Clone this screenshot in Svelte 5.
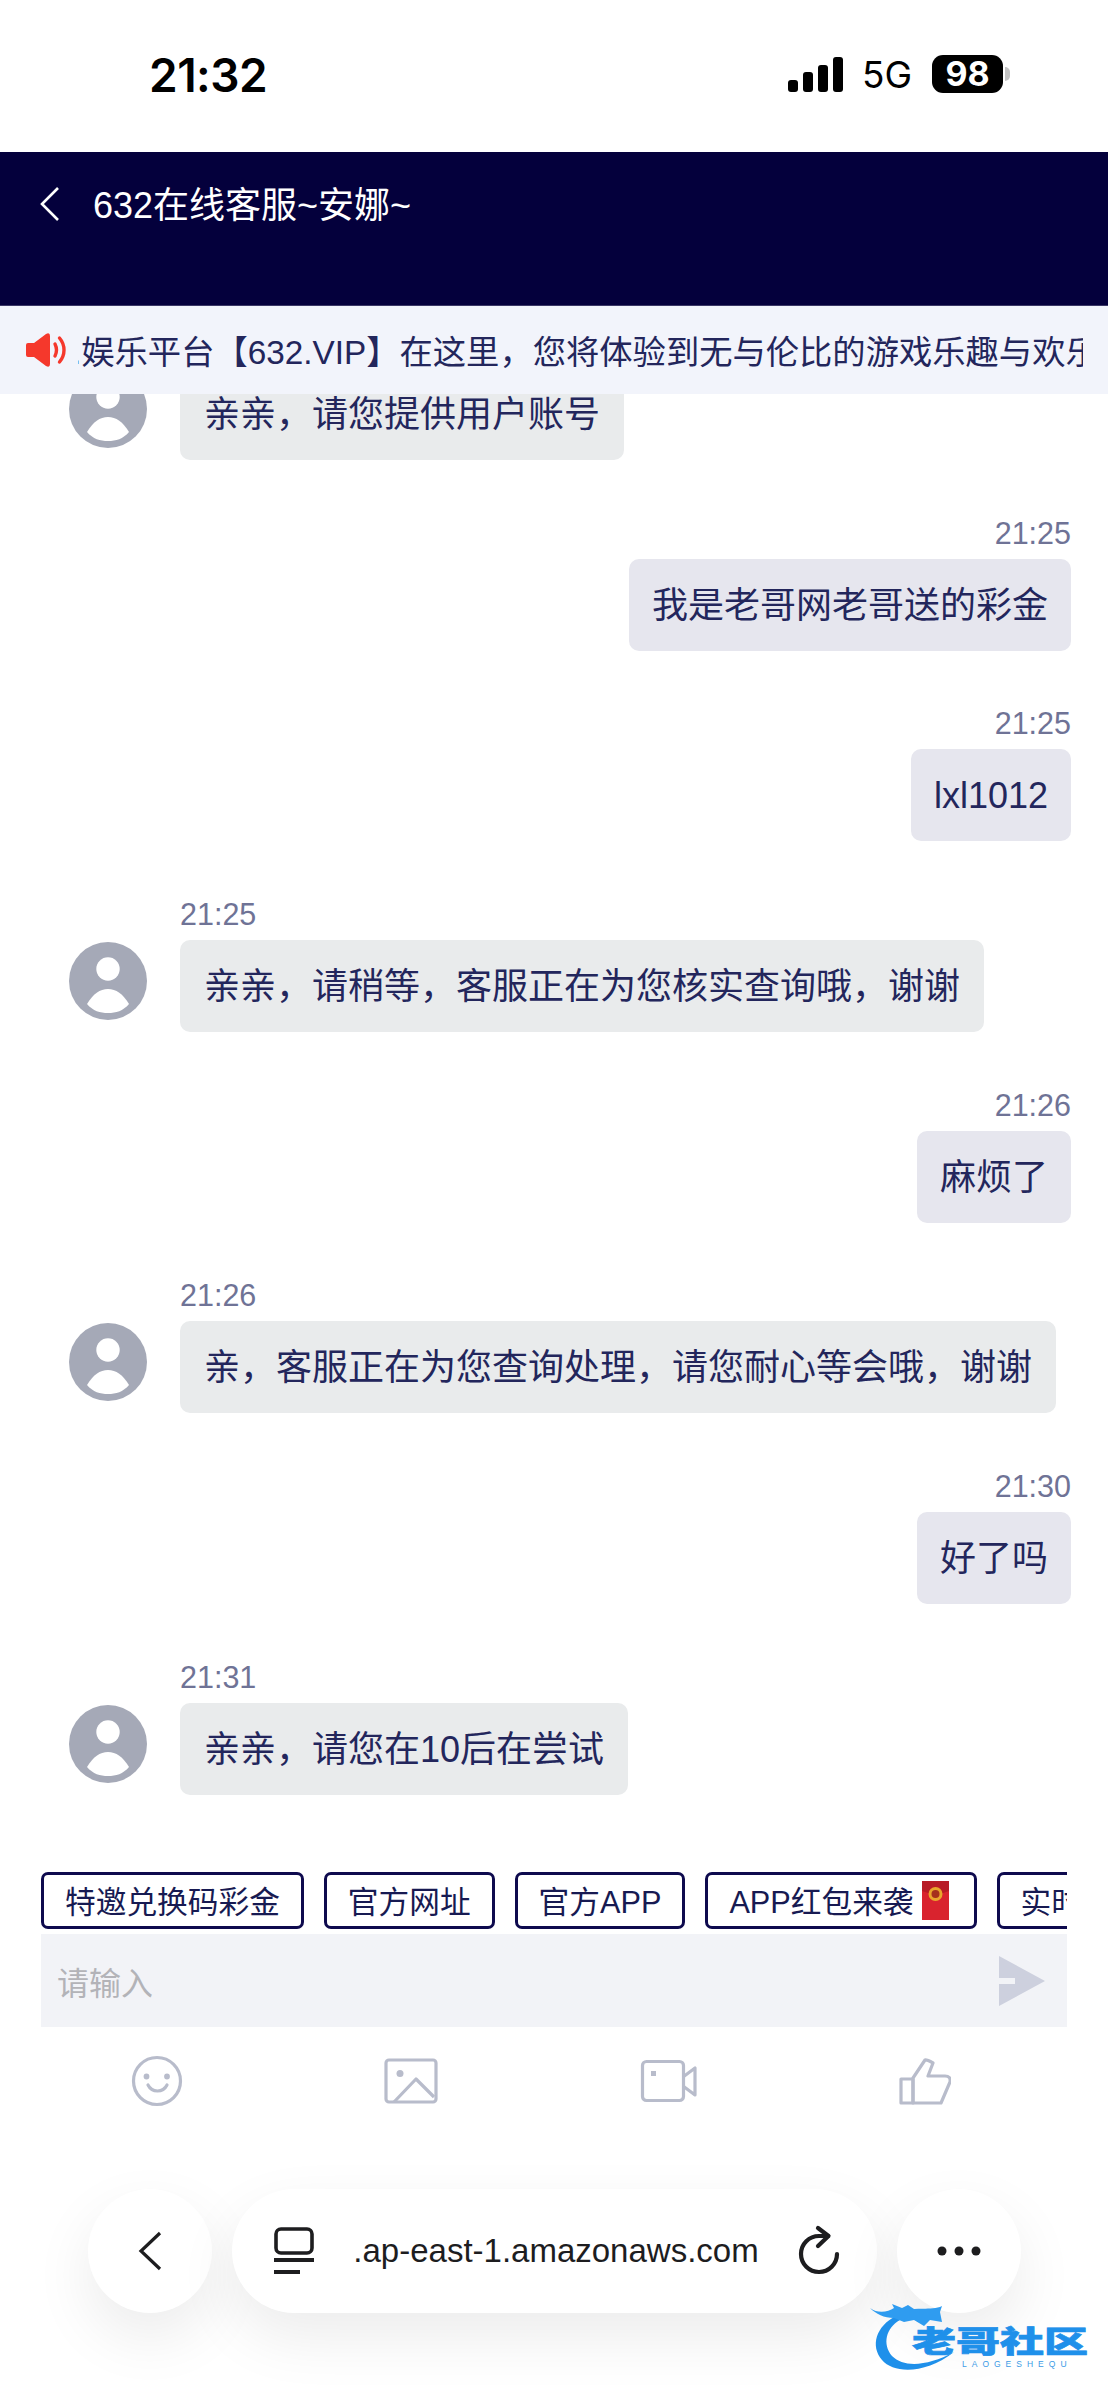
<script>
  const messages = [
    { side: 'left', time: '', text: '亲亲，请您提供用户账号' },
    { side: 'right', time: '21:25', text: '我是老哥网老哥送的彩金' },
    { side: 'right', time: '21:25', text: 'lxl1012' },
    { side: 'left', time: '21:25', text: '亲亲，请稍等，客服正在为您核实查询哦，谢谢' },
    { side: 'right', time: '21:26', text: '麻烦了' },
    { side: 'left', time: '21:26', text: '亲，客服正在为您查询处理，请您耐心等会哦，谢谢' },
    { side: 'right', time: '21:30', text: '好了吗' },
    { side: 'left', time: '21:31', text: '亲亲，请您在10后在尝试' },
    { side: 'right', time: '21:32', text: '' }
  ];

  const chips = ['特邀兑换码彩金', '官方网址', '官方APP', 'APP红包来袭', '实时'];
</script>

<div class="page">
  <div class="status">
    <span class="clock">21:32</span>
    <div class="status-right">
      <div class="signal">
        <i style="height:12px"></i><i style="height:20px"></i><i style="height:27px"></i><i style="height:35px"></i>
      </div>
      <span class="net">5G</span>
      <span class="battery">98</span>
      <span class="nub"></span>
    </div>
  </div>

  <header>
    <svg class="back" width="22" height="36" viewBox="0 0 22 36" fill="none">
      <path d="M19 2 3 18l16 16" stroke="#fff" stroke-width="2.6" />
    </svg>
    <span class="title">632在线客服~安娜~</span>
  </header>

  <div class="notice">
    <svg class="horn" width="42" height="34" viewBox="0 0 42 34">
      <path d="M0 12q0-2 2-2h6L20 1q4-2 4 2v28q0 4-4 2L8 24H2q-2 0-2-2z" fill="#f5382c" />
      <path d="M29 11c2 4 2 8 0 12M33.500 5c6 7 6 17 0 24" fill="none" stroke="#f5382c" stroke-width="3.400" stroke-linecap="round" />
    </svg>
    <div class="marquee"><span>.娱乐平台【632.VIP】在这里，您将体验到无与伦比的游戏乐趣与欢乐</span></div>
  </div>

  <main class="chat">
    {#each messages as m, i}
      <div class="msg {m.side}" class:first={i === 0}>
        {#if m.side === 'left'}
          <svg class="avatar" width="78" height="78" viewBox="0 0 78 78">
            <circle cx="39" cy="39" r="39" fill="#a5a9b7" />
            <circle cx="39" cy="27" r="11.7" fill="#fff" />
            <path d="M18 62C24 52 31 47 39 47S54 52 60 62C54 69 47 71 39 71S24 69 18 62Z" fill="#fff" />
          </svg>
        {/if}
        <div class="col">
          {#if m.time}<div class="time">{m.time}</div>{/if}
          {#if m.text}<div class="bubble">{m.text}</div>{/if}
        </div>
      </div>
    {/each}
  </main>

  <div class="chips">
    {#each chips as c}
      <div class="chip">
        {c}
        {#if c === 'APP红包来袭'}
          <svg class="packet" width="27" height="39" viewBox="0 0 27 39">
            <rect width="27" height="39" fill="#d9232e" />
            <path d="M0 0h27v10q-13 6-27 0z" fill="#b81c26" />
            <circle cx="13.5" cy="13" r="7" fill="#e9a62c" />
            <circle cx="13.5" cy="13" r="4" fill="#a5301c" />
          </svg>
        {/if}
      </div>
    {/each}
  </div>

  <div class="input">
    <span class="placeholder">请输入</span>
    <svg width="46" height="50" viewBox="0 0 46 50">
      <path d="M0 0 46 25 0 50V28h16v-6H0z" fill="#cdd0de" />
    </svg>
  </div>

  <div class="tools">
    <svg width="52" height="52" viewBox="0 0 52 52" fill="none" stroke="#b8bccb" stroke-width="3.2">
      <circle cx="26" cy="26" r="23.5" />
      <circle cx="15.500" cy="21.500" r="1.300" fill="#b8bccb" />
      <circle cx="36" cy="21.500" r="1.300" fill="#b8bccb" />
      <path d="M17 30c4 8 15 8 19 0" stroke-linecap="round" />
    </svg>
    <svg width="54" height="46" viewBox="0 0 54 46" fill="none" stroke="#b8bccb" stroke-width="3.2" stroke-linejoin="round">
      <rect x="2" y="2" width="50" height="42" rx="3" />
      <circle cx="16" cy="15.500" r="3.500" fill="#b8bccb" stroke="none" />
      <path d="M10 44 32 21l18 18" />
    </svg>
    <svg width="58" height="44" viewBox="0 0 58 44" fill="none" stroke="#b8bccb" stroke-width="3.2" stroke-linejoin="round">
      <rect x="2.500" y="2.500" width="41" height="39" rx="4" />
      <rect x="11" y="12" width="5" height="5" fill="#b8bccb" stroke="none" />
      <path d="M43 18 55 9v27L43 27" />
    </svg>
    <svg width="52" height="48" viewBox="0 0 52 48" fill="none" stroke="#b8bccb" stroke-width="3.2" stroke-linejoin="round">
      <path d="M14 21 26 3q1-1 8 3l-5 13h17q6 0 5 6l-9 21H14z" />
      <path d="M2 22h12v24H2z" />
    </svg>
  </div>

  <div class="browser">
    <div class="round">
      <svg width="24" height="40" viewBox="0 0 24 40" fill="none">
        <path d="M22 2 3 20l19 18" stroke="#1d1d1f" stroke-width="3.2" />
      </svg>
    </div>
    <div class="pill">
      <svg width="40" height="48" viewBox="0 0 40 48" fill="none">
        <rect x="2" y="2" width="36" height="24" rx="5" stroke="#1d1d1f" stroke-width="3.6" />
        <path d="M0 33h40" stroke="#1d1d1f" stroke-width="4" />
        <path d="M0 45h26" stroke="#1d1d1f" stroke-width="4" />
      </svg>
      <span class="url">.ap-east-1.amazonaws.com</span>
      <svg width="44" height="52" viewBox="0 0 44 52" fill="none" stroke="#1d1d1f" stroke-width="4.200" stroke-linecap="round" stroke-linejoin="round">
        <path d="M30 11H21A18 18 0 1 0 39 29" />
        <path d="M20 3l10.500 8L20 21" />
      </svg>
    </div>
    <div class="round">
      <svg width="44" height="10" viewBox="0 0 44 10" fill="#1d1d1f">
        <circle cx="5" cy="5" r="4.5" /><circle cx="22" cy="5" r="4.5" /><circle cx="39" cy="5" r="4.5" />
      </svg>
    </div>
  </div>

  <div class="mark">
    <svg width="110" height="80" viewBox="0 0 110 80">
      <path d="M28 16C8 26 2 46 14 60 26 74 58 74 86 52 60 66 36 68 24 56 14 44 18 28 32 20Z" fill="#1f90ea" />
      <path d="M2 8C10 14 20 12 26 8L24 4 34 8 40 5 46 9C54 8 66 10 74 6L72 12 74 22 62 20 56 26 46 20 36 22 26 18C16 18 8 14 2 8Z" fill="#2f9cf0" />
    </svg>
    <span class="mark-name">老哥社区</span>
    <span class="mark-sub">LAOGESHEQU</span>
  </div>
</div>

<style>
  :global(body) {
    margin: 0;
    background: #fff;
  }

  .page {
    position: relative;
    width: 1108px;
    height: 2400px;
    overflow: hidden;
    font-family: "Liberation Sans", "Noto Sans CJK SC", sans-serif;
    color: #23265c;
  }

  .status {
    height: 152px;
    display: flex;
    justify-content: space-between;
    align-items: flex-start;
    padding: 0 98px 0 149px;
    box-sizing: border-box;
    color: #000;
    font-family: Inter, sans-serif;
  }

  .clock {
    margin-top: 47px;
    font-size: 46px;
    line-height: 56px;
    font-weight: 600;
    letter-spacing: -0.5px;
  }

  .status-right {
    display: flex;
    align-items: flex-end;
    margin-top: 55px;
    height: 38px;
  }

  .signal {
    display: flex;
    align-items: flex-end;
    gap: 5px;
    height: 35px;
    margin-bottom: 1px;
  }

  .signal i {
    width: 10px;
    background: #000;
    border-radius: 3px;
  }

  .net {
    margin: 0 0 -1px 19px;
    font-size: 37px;
    line-height: 38px;
    font-weight: 400;
  }

  .battery {
    margin-left: 20px;
    width: 71px;
    height: 38px;
    border-radius: 11px;
    background: #000;
    color: #fff;
    font-size: 34px;
    font-weight: 700;
    line-height: 38px;
    text-align: center;
  }

  .nub {
    width: 5px;
    height: 14px;
    margin: 0 0 12px 2px;
    background: #c4c4c4;
    border-radius: 0 5px 5px 0;
  }

  header {
    height: 154px;
    box-sizing: border-box;
    background: #04003c;
    border-bottom: 1px solid #3b3866;
    display: flex;
    align-items: flex-start;
    padding: 34px 0 0 39px;
    color: #fff;
  }

  .title {
    margin: 2px 0 0 32px;
    font-size: 36px;
    line-height: 36px;
  }

  .notice {
    height: 88px;
    background: #f2f4fb;
    display: flex;
    align-items: center;
    padding-left: 26px;
    position: relative;
    z-index: 1;
  }

  .marquee {
    margin: 5px 0 0 10px;
    width: 1005px;
    overflow: hidden;
    white-space: nowrap;
    font-size: 33.3px;
    line-height: 40px;
    text-indent: -6px;
  }

  .horn {
    flex: none;
  }

  .chat {
    height: 1462px;
    overflow: hidden;
    box-sizing: border-box;
    padding-right: 37px;
  }

  .msg {
    display: flex;
    padding-top: 58.7px;
  }

  .msg.first {
    padding-top: 0;
    margin-top: -26px;
  }

  .msg.left {
    padding-left: 69px;
    gap: 33px;
  }

  .msg.right {
    justify-content: flex-end;
  }

  .col {
    display: flex;
    flex-direction: column;
  }

  .right .col {
    align-items: flex-end;
  }

  .avatar {
    flex: none;
    align-self: flex-end;
    margin-bottom: 12px;
  }

  .time {
    height: 40px;
    font-size: 30.5px;
    line-height: 28px;
    color: #6f7396;
  }

  .bubble {
    height: 92px;
    box-sizing: border-box;
    padding: 0 24px;
    border-radius: 10px;
    font-size: 36px;
    line-height: 93px;
    white-space: nowrap;
    background: #e9ebec;
  }

  .right .bubble {
    padding: 0 23px;
    background: #e6e6ee;
  }

  .chips {
    margin: 16px 41px 0;
    display: flex;
    gap: 20px;
    overflow: hidden;
  }

  .chip {
    flex: none;
    height: 57px;
    box-sizing: border-box;
    display: flex;
    align-items: center;
    gap: 8px;
    padding: 0 21px 3px;
    border: 3px solid #0e0a4e;
    border-radius: 7px;
    font-size: 30.7px;
    white-space: nowrap;
    color: #171a52;
  }

  .packet {
    margin: 3px 4px 0 0;
  }

  .input {
    margin: 5px 41px 0;
    height: 93px;
    background: #f2f3f7;
    display: flex;
    align-items: center;
    justify-content: space-between;
    padding: 0 22px 0 16px;
  }

  .placeholder {
    font-size: 32px;
    color: #b3b3b8;
  }

  .tools {
    display: flex;
    align-items: center;
    justify-content: space-between;
    margin: 28px 157px 0 131px;
    height: 52px;
  }

  .browser {
    margin-top: 82px;
    padding-left: 88px;
    display: flex;
    gap: 20px;
  }

  .round,
  .pill {
    height: 124px;
    background: #fff;
    border-radius: 62px;
    box-shadow: 0 24px 60px rgba(0, 0, 0, 0.08);
    display: flex;
    align-items: center;
  }

  .round {
    width: 124px;
    justify-content: center;
  }

  .pill {
    width: 645px;
    box-sizing: border-box;
    padding: 0 35px 0 42px;
    justify-content: space-between;
  }

  .url {
    font-size: 33px;
    color: #1d1d1f;
    white-space: nowrap;
  }

  .mark {
    position: absolute;
    left: 868px;
    top: 2300px;
    width: 240px;
    height: 80px;
  }

  .mark svg {
    position: absolute;
    left: 0;
    top: 0;
  }

  .mark-name {
    position: absolute;
    left: 44px;
    top: 17px;
    font-size: 44px;
    line-height: 50px;
    font-weight: 900;
    color: #1f90ea;
    -webkit-text-stroke: 1px #1f90ea;
    white-space: nowrap;
    transform: scaleY(0.68);
  }

  .mark-sub {
    position: absolute;
    left: 94px;
    top: 60px;
    font-size: 8.5px;
    line-height: 8px;
    letter-spacing: 5px;
    color: #3c9be6;
    white-space: nowrap;
  }
</style>
